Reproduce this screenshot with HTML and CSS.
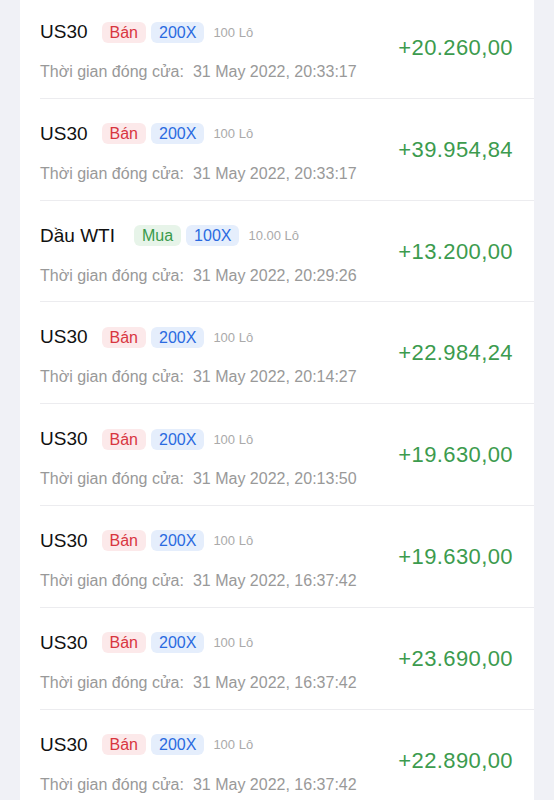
FILE: index.html
```html
<!DOCTYPE html>
<html lang="vi">
<head>
<meta charset="UTF-8" />
<meta name="viewport" content="width=device-width, initial-scale=1" />
<title>Lịch sử giao dịch</title>
<link rel="stylesheet" href="styles.css">
</head>
<body>

<div class="history">
  <div class="trade">
    <div class="info">
      <div class="head">
        <span class="symbol">US30</span>
        <span class="tag sell">Bán</span>
        <span class="tag lever">200X</span>
        <span class="lot">100 Lô</span>
      </div>
      <div class="time"><span class="label">Thời gian đóng cửa:</span><span class="date">31 May 2022, 20:33:17</span></div>
    </div>
    <div class="amount">+20.260,00</div>
  </div>

  <div class="trade">
    <div class="info">
      <div class="head">
        <span class="symbol">US30</span>
        <span class="tag sell">Bán</span>
        <span class="tag lever">200X</span>
        <span class="lot">100 Lô</span>
      </div>
      <div class="time"><span class="label">Thời gian đóng cửa:</span><span class="date">31 May 2022, 20:33:17</span></div>
    </div>
    <div class="amount">+39.954,84</div>
  </div>

  <div class="trade">
    <div class="info">
      <div class="head">
        <span class="symbol wide">Dầu WTI</span>
        <span class="tag buy">Mua</span>
        <span class="tag lever">100X</span>
        <span class="lot">10.00 Lô</span>
      </div>
      <div class="time"><span class="label">Thời gian đóng cửa:</span><span class="date">31 May 2022, 20:29:26</span></div>
    </div>
    <div class="amount">+13.200,00</div>
  </div>

  <div class="trade">
    <div class="info">
      <div class="head">
        <span class="symbol">US30</span>
        <span class="tag sell">Bán</span>
        <span class="tag lever">200X</span>
        <span class="lot">100 Lô</span>
      </div>
      <div class="time"><span class="label">Thời gian đóng cửa:</span><span class="date">31 May 2022, 20:14:27</span></div>
    </div>
    <div class="amount">+22.984,24</div>
  </div>

  <div class="trade">
    <div class="info">
      <div class="head">
        <span class="symbol">US30</span>
        <span class="tag sell">Bán</span>
        <span class="tag lever">200X</span>
        <span class="lot">100 Lô</span>
      </div>
      <div class="time"><span class="label">Thời gian đóng cửa:</span><span class="date">31 May 2022, 20:13:50</span></div>
    </div>
    <div class="amount">+19.630,00</div>
  </div>

  <div class="trade">
    <div class="info">
      <div class="head">
        <span class="symbol">US30</span>
        <span class="tag sell">Bán</span>
        <span class="tag lever">200X</span>
        <span class="lot">100 Lô</span>
      </div>
      <div class="time"><span class="label">Thời gian đóng cửa:</span><span class="date">31 May 2022, 16:37:42</span></div>
    </div>
    <div class="amount">+19.630,00</div>
  </div>

  <div class="trade">
    <div class="info">
      <div class="head">
        <span class="symbol">US30</span>
        <span class="tag sell">Bán</span>
        <span class="tag lever">200X</span>
        <span class="lot">100 Lô</span>
      </div>
      <div class="time"><span class="label">Thời gian đóng cửa:</span><span class="date">31 May 2022, 16:37:42</span></div>
    </div>
    <div class="amount">+23.690,00</div>
  </div>

  <div class="trade">
    <div class="info">
      <div class="head">
        <span class="symbol">US30</span>
        <span class="tag sell">Bán</span>
        <span class="tag lever">200X</span>
        <span class="lot">100 Lô</span>
      </div>
      <div class="time"><span class="label">Thời gian đóng cửa:</span><span class="date">31 May 2022, 16:37:42</span></div>
    </div>
    <div class="amount">+22.890,00</div>
  </div>
</div>

</body>
</html>
```

FILE: styles.css
```css
body {
  margin: 0;
  background: #f0f1f6;
  font-family: 'Liberation Sans', Arial, sans-serif;
  color: #111;
}
.history {
  margin: -3px 20px 0;
  background: #fff;
}
.trade {
  display: flex;
  justify-content: space-between;
  align-items: flex-start;
  height: 101.8px;
  box-sizing: border-box;
  margin-left: 20px;
  padding: 23px 21px 0 0;
  border-bottom: 1px solid #ececef;
}
.head {
  display: flex;
  align-items: center;
  height: 24px;
}
.symbol {
  font-size: 19px;
  margin-right: 14px;
}
.symbol.wide {
  margin-right: 19px;
}
.tag {
  font-size: 16px;
  line-height: 21px;
  padding: 0 8px;
  border-radius: 6px;
  margin-right: 5px;
}
.sell {
  color: #d8363f;
  background: #fce9ea;
}
.buy {
  color: #3a9a4c;
  background: #e7f4e9;
}
.lever {
  color: #2a6ae0;
  background: #e5eefc;
}
.lot {
  font-size: 13px;
  color: #aaa;
  margin-left: 4px;
}
.time {
  margin-top: 18px;
  font-size: 16px;
  line-height: 20px;
  color: #999;
}
.date {
  margin-left: 9px;
}
.amount {
  margin-top: 15px;
  font-size: 22px;
  line-height: 26px;
  letter-spacing: 0.4px;
  color: #3c9b4e;
}
```
